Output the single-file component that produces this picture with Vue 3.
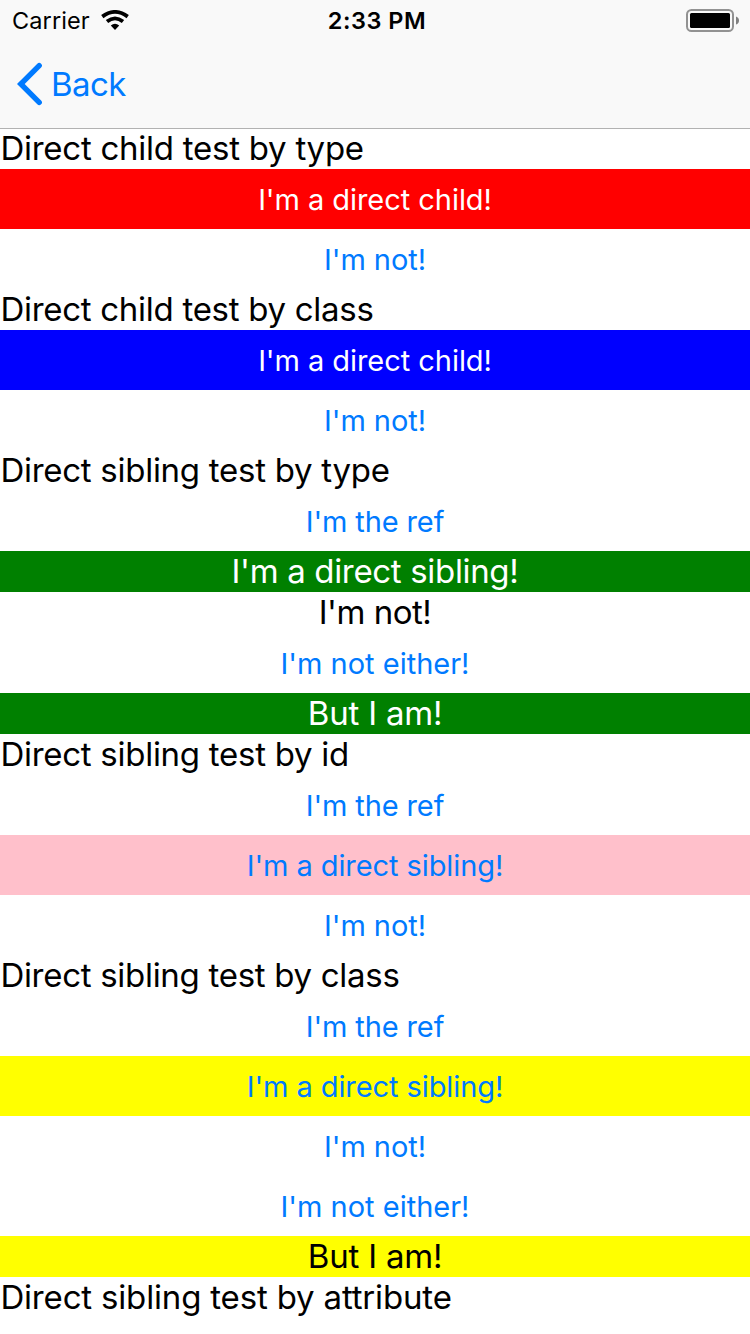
<script setup>
// s: letter spacing in pixels
const rows = [
  { k: 'label', t: 'Direct child test by type', s: -0.25 },
  { k: 'button', t: "I'm a direct child!", c: 'red', s: -0.05 },
  { k: 'button', t: "I'm not!", s: -0.05 },
  { k: 'label', t: 'Direct child test by class', s: -0.28 },
  { k: 'button', t: "I'm a direct child!", c: 'blue', s: -0.05 },
  { k: 'button', t: "I'm not!", s: -0.05 },
  { k: 'label', t: 'Direct sibling test by type', s: -0.27 },
  { k: 'button', t: "I'm the ref", s: -0.12 },
  { k: 'label center', t: "I'm a direct sibling!", c: 'green', s: -0.33 },
  { k: 'label center', t: "I'm not!", s: -0.5 },
  { k: 'button', t: "I'm not either!", s: 0 },
  { k: 'label center', t: 'But I am!', c: 'green', s: -0.2 },
  { k: 'label', t: 'Direct sibling test by id', s: -0.27 },
  { k: 'button', t: "I'm the ref", s: -0.12 },
  { k: 'button', t: "I'm a direct sibling!", c: 'pink', s: -0.08 },
  { k: 'button', t: "I'm not!", s: -0.05 },
  { k: 'label', t: 'Direct sibling test by class', s: -0.29 },
  { k: 'button', t: "I'm the ref", s: -0.12 },
  { k: 'button', t: "I'm a direct sibling!", c: 'yellow', s: -0.08 },
  { k: 'button', t: "I'm not!", s: -0.05 },
  { k: 'button', t: "I'm not either!", s: 0 },
  { k: 'label center', t: 'But I am!', c: 'yellow', s: -0.2 },
  { k: 'label', t: 'Direct sibling test by attribute', s: -0.17 },
]
</script>

<template>
  <div class="screen">
    <header>
      <div class="status">
        <div class="carrier">
          <span>Carrier</span>
          <svg width="28" height="20" viewBox="0 0 28 20">
            <path d="M1.3 6.6Q14 -2.8 26.7 6.6M6 11.6Q14 5.2 22 11.6" fill="none" stroke="#000" stroke-width="3.8" />
            <path d="M9.8 15.4Q14 12.2 18.2 15.4L14 19.9Z" />
          </svg>
        </div>
        <span class="time">2:33 PM</span>
        <svg class="battery" width="54" height="24" viewBox="0 0 54 24">
          <rect x="1" y="1" width="46" height="21" rx="4.5" fill="none" stroke="#929292" stroke-width="2" />
          <rect x="4" y="4" width="40" height="15" rx="1.5" />
          <path d="M50 7.5Q53 8.5 53 11.5Q53 14.5 50 15.5Z" fill="#808080" />
        </svg>
      </div>
      <div class="nav">
        <svg width="26" height="44" viewBox="0 0 26 44"><path d="M22.2 3.6L3.8 22L22.2 40.4" fill="none" stroke="#007aff" stroke-width="5.4" stroke-linecap="round" /></svg>
        <span>Back</span>
      </div>
    </header>
    <main>
      <div v-for="(r, i) in rows" :key="i" :class="['row', r.k, r.c]"><span :style="{ letterSpacing: r.s + 'px' }">{{ r.t }}</span></div>
    </main>
  </div>
</template>

<style>
body { margin: 0; background: #fff; }
</style>
<style scoped>
.screen { width: 750px; height: 1334px; overflow: hidden; background: #fff; color: #000; font-family: Inter, "Liberation Sans", sans-serif; }
header { height: 128px; box-sizing: content-box; border-bottom: 1px solid #b2b2b2; background: #f9f9f9; }
.status { display: grid; grid-template-columns: 1fr auto 1fr; align-items: center; height: 41px; font-size: 23.5px; padding: 0 10px 0 12px; }
.carrier { display: flex; align-items: center; gap: 11px; letter-spacing: 0.1px; }
.carrier svg { margin-top: -1px; }
.time { font-weight: 600; letter-spacing: 0.5px; margin-left: 2px; }
.battery { justify-self: end; }
.nav { display: flex; align-items: center; height: 86px; padding-left: 17px; gap: 8px; color: #007aff; font-size: 33px; letter-spacing: -0.6px; }
.row { display: flex; align-items: center; white-space: pre; }
.label { height: 41px; box-sizing: border-box; padding-bottom: 1px; font-size: 33px; }
.label:not(.center) { padding-left: 0.4px; }
.label:first-child { height: 40px; padding-bottom: 2px; }
.button { height: 60px; justify-content: center; color: #007aff; font-size: 29px; }
.center { justify-content: center; }
.red { background: #f00; color: #fff; }
.blue { background: #00f; color: #fff; }
.green { background: #008000; color: #fff; }
.pink { background: #ffc0cb; }
.yellow { background: #ff0; }
</style>
